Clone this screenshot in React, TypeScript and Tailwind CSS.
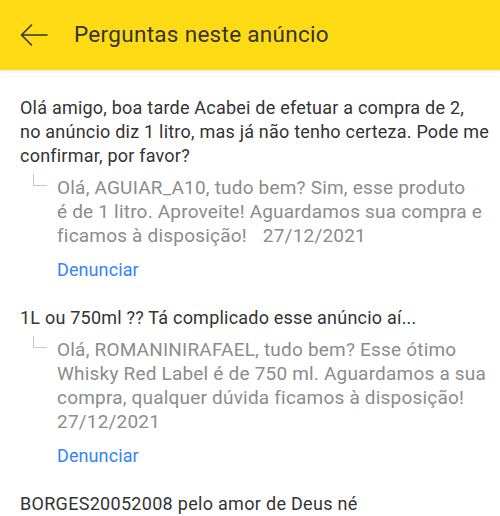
const perguntas = [
  {
    id: 1,
    texto:
      "Olá amigo, boa tarde Acabei de efetuar a compra de 2,\nno anúncio diz 1 litro, mas já não tenho certeza. Pode me\nconfirmar, por favor?",
    resposta:
      "Olá, AGUIAR_A10, tudo bem? Sim, esse produto\né de 1 litro. Aproveite! Aguardamos sua compra e\nficamos à disposição!",
    data: "27/12/2021",
    dataNovaLinha: false,
  },
  {
    id: 2,
    texto: "1L ou 750ml ?? Tá complicado esse anúncio aí...",
    resposta:
      "Olá, ROMANINIRAFAEL, tudo bem? Esse ótimo\nWhisky Red Label é de 750 ml. Aguardamos a sua\ncompra, qualquer dúvida ficamos à disposição!",
    data: "27/12/2021",
    dataNovaLinha: true,
  },
]

function BackArrow() {
  return (
    <svg width="28" height="22" viewBox="0 0 28 22" fill="none" className="shrink-0">
      <path
        d="M1.5 11H27M11.5 1L1.5 11l10 10"
        stroke="#333"
        strokeWidth="1.6"
        strokeLinecap="round"
        strokeLinejoin="round"
      />
    </svg>
  )
}

function Connector() {
  return (
    <div className="w-[37px] shrink-0 pl-[13px]">
      <div className="-mt-[2px] h-[12px] w-[14px] border-b border-l border-[#c8c8c8]" />
    </div>
  )
}

export default function App() {
  return (
    <div className="h-[516px] w-[500px] overflow-hidden bg-white font-['Roboto',sans-serif]">
      {/* Header */}
      <header className="relative z-10 flex h-[70px] items-center bg-[#ffdb15] pl-[20px] shadow-[0_1px_3px_rgba(0,0,0,0.12)]">
        <BackArrow />
        <h1 className="ml-[26px] text-[22.5px] tracking-[0.3px] text-[#333]">Perguntas neste anúncio</h1>
      </header>

      {/* Lista de perguntas */}
      <div className="px-5 pt-[26px]">
        {perguntas.map((p) => (
          <div key={p.id} className="mb-[24px]">
            <p className="whitespace-pre text-[18px] leading-[24px] tracking-[0.22px] text-[#333]">{p.texto}</p>
            <div className="mt-[8px] flex">
              <Connector />
              <div className="leading-[24px]">
                <p className="whitespace-pre text-[19px] tracking-[0.2px] text-[#8c8c8c]">
                  {p.resposta}
                  {p.dataNovaLinha ? "\n" : <span className="inline-block w-[16px]" />}
                  {p.data}
                </p>
                <button className="mt-[10px] block text-[18px] leading-[24px] tracking-[0.1px] text-[#3483fa]">
                  Denunciar
                </button>
              </div>
            </div>
          </div>
        ))}
        <p className="text-[18px] leading-[24px] tracking-[0.3px] text-[#333]">BORGES20052008 pelo amor de Deus né</p>
      </div>
    </div>
  )
}
